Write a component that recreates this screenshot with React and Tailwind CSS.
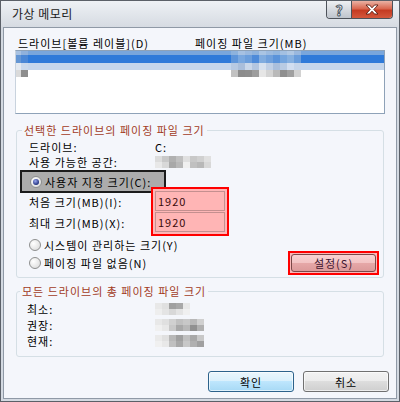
import React from "react";

// blurred list rows: [left blocks], [right blocks], base colour, height
const listRows = [
  {
    h: "h-[4px]",
    base: "bg-[#79a6dc]",
    left: ["bg-[#a8c2e2]", "bg-[#8fb1dc]"],
    right: ["bg-[#8db2dd]", "bg-[#a6c1e2]", "bg-[#9ab9df]", "bg-[#8fb3dd]", "bg-[#a9c4e3]", "bg-[#9cbbe0]", "bg-[#93b6de]", "bg-[#a3c0e2]", "bg-[#b0c8e4]", "bg-[#9ab8de]"],
  },
  {
    h: "h-[8px]",
    base: "bg-[#2f7ad9]",
    left: ["bg-[#6496d4]", "bg-[#4a87d6]"],
    right: ["bg-[#5e95da]", "bg-[#7aa8df]", "bg-[#6b9edc]", "bg-[#4e8bd9]", "bg-[#80acdf]", "bg-[#6fa0dc]", "bg-[#5a93da]", "bg-[#74a5de]", "bg-[#86b0e0]", "bg-[#6a9ddb]"],
  },
  {
    h: "h-[7px]",
    base: "bg-[#c5d6ec]",
    left: ["bg-[#e3e9f1]", "bg-[#cad9ec]"],
    right: ["bg-[#b7c9e2]", "bg-[#a9bedb]", "bg-[#c9d7ea]", "bg-[#b3c6e0]", "bg-[#d6e1ef]", "bg-[#c0d0e6]", "bg-[#aabfdc]", "bg-[#b9cbe3]", "bg-[#d2def0]", "bg-[#c6d5ea]"],
  },
  {
    h: "h-[7px]",
    base: "bg-white",
    left: ["bg-[#dadada]", "bg-[#8e8e8e]"],
    right: ["bg-[#c2c2c2]", "bg-[#8c8c8c]", "bg-[#8e8e8e]", "bg-[#9d9d9d]", "bg-[#e6e6e6]", "bg-[#d4d4d4]", "bg-[#bababa]", "bg-[#8f8f8f]", "bg-[#a0a0a0]", "bg-[#d2d2d2]"],
  },
];

const freeSpace = [
  ["bg-[#dcdcdc]", "bg-[#c8c8c8]", "bg-[#b0b0b0]", "bg-[#c0c0c0]", "bg-[#e0e0e0]", "bg-[#c8c8c8]", "bg-[#d0d0d0]", "bg-[#e0e0e0]"],
  ["bg-[#e8e8e8]", "bg-[#d8d8d8]", "bg-[#a8a8a8]", "bg-[#b8b8b8]", "bg-[#f0f0f0]", "bg-[#c0c0c0]", "bg-[#b8b8b8]", "bg-[#d8d8d8]"],
];

const totals = [
  {
    label: "최소:",
    pix: [
      ["bg-[#e8e8e8]", "bg-[#e0e0e0]", "bg-[#a0a0a0]", "bg-[#a8a8a8]", "bg-[#e8e8e8]"],
      ["bg-[#eeeeee]", "bg-[#e4e4e4]", "bg-[#d8d8d8]", "bg-[#e4e4e4]", "bg-[#f0f0f0]"],
    ],
  },
  {
    label: "권장:",
    pix: [
      ["bg-[#e8e8e8]", "bg-[#e0e0e0]", "bg-[#d0d0d0]", "bg-[#c0c0c0]", "bg-[#c8c8c8]", "bg-[#b8b8b8]", "bg-[#d0d0d0]"],
      ["bg-[#f0f0f0]", "bg-[#e8e8e8]", "bg-[#c8c8c8]", "bg-[#a8a8a8]", "bg-[#b8b8b8]", "bg-[#909090]", "bg-[#b0b0b0]"],
    ],
  },
  {
    label: "현재:",
    pix: [
      ["bg-[#eaeaea]", "bg-[#e0e0e0]", "bg-[#b8b8b8]", "bg-[#a0a0a0]", "bg-[#c0c0c0]", "bg-[#a8a8a8]", "bg-[#c8c8c8]"],
      ["bg-[#f0f0f0]", "bg-[#e8e8e8]", "bg-[#c0c0c0]", "bg-[#a8a8a8]", "bg-[#c8c8c8]", "bg-[#b0b0b0]", "bg-[#a0a0a0]"],
    ],
  },
];

function Pix({ rows }) {
  return (
    <div className="flex flex-col">
      {rows.map((row, i) => (
        <div key={i} className="flex">
          {row.map((c, j) => (
            <div key={j} className={`w-[7px] h-[6px] ${c}`} />
          ))}
        </div>
      ))}
    </div>
  );
}

function Radio({ checked }) {
  return (
    <span className="w-[12px] h-[12px] rounded-full border border-[#8e8f8f] bg-[radial-gradient(circle_at_35%_35%,#ffffff,#d6d6d6)] flex items-center justify-center shrink-0">
      {checked && (
        <span className="w-[6px] h-[6px] rounded-full bg-[radial-gradient(circle_at_40%_35%,#9aa8f0,#1b2a78_75%)]" />
      )}
    </span>
  );
}

export default function App() {
  return (
    <div className="w-[400px] h-[402px] flex flex-col bg-[#d3d9e1] border border-[#5b6068] text-[11px] leading-[14px] tracking-[1px] text-black font-['Noto_Sans_CJK_KR','Noto_Sans',sans-serif]">
      {/* Title bar */}
      <div className="h-[26px] flex justify-between bg-gradient-to-b from-[#eef1f5] to-[#d6dbe2]">
        <span className="ml-[11px] mt-[6px] text-[12px] tracking-[0.5px] text-[#1a1a1a]">가상 메모리</span>
        <div className="flex mr-[6px] h-[18px] border border-t-0 border-[#4d525a] rounded-b-[4px] overflow-hidden">
          <div className="w-[25px] flex items-center justify-center bg-gradient-to-b from-[#eef0f3] to-[#bfc5cd] border-r border-[#4d525a] text-[14px] font-bold tracking-normal text-white [-webkit-text-stroke:1px_#4f5a66]">
            ?
          </div>
          <div className="w-[40px] flex items-center justify-center bg-[linear-gradient(to_bottom,#eab2a4_0%,#d9674f_45%,#c53b22_55%,#d4573c_100%)]">
            <svg width="14" height="11" viewBox="0 0 14 11">
              <path
                d="M1 1h3.5L7 3.8 9.5 1H13L8.8 5.5 13 10H9.5L7 7.2 4.5 10H1l4.2-4.5z"
                fill="#ffffff"
                stroke="#5a1d12"
                strokeWidth="0.9"
              />
            </svg>
          </div>
        </div>
      </div>

      {/* Client area */}
      <div className="flex-1 mx-[2px] mb-[2px] bg-[#f4f6fb] border border-[#8f99a6] flex flex-col">
        <div className="flex mt-[8px] pl-[14px]">
          <span className="w-[177px]">드라이브[볼륨 레이블](D)</span>
          <span>페이징 파일 크기(MB)</span>
        </div>

        {/* Drive list */}
        <div className="mx-[11px] h-[64px] bg-white border border-[#8ea2b8] border-l-[#c9d3de] flex flex-col">
          {listRows.map((r, i) => (
            <div key={i} className={`flex ${r.h} ${r.base}`}>
              <div className={`w-[5px] ${r.left[0]}`} />
              <div className={`w-[7px] ${r.left[1]}`} />
              <div className="w-[203px]" />
              {r.right.map((c, j) => (
                <div key={j} className={`w-[7px] ${c}`} />
              ))}
            </div>
          ))}
        </div>

        {/* Selected drive */}
        <fieldset className="mx-[12px] mt-[9px] border border-[#d5dfe5] rounded-[3px] pb-[2px]">
          <legend className="ml-[5px] px-[2px] text-[#a23b1e]">선택한 드라이브의 페이징 파일 크기</legend>
          <div className="pl-[12px] pr-[4px]">
            <div className="flex mt-[3px]">
              <span className="w-[126px]">드라이브:</span>
              <span>C:</span>
            </div>
            <div className="flex mt-[1px] h-[14px] items-center">
              <span className="w-[126px]">사용 가능한 공간:</span>
              <Pix rows={freeSpace} />
            </div>
            <div className="-ml-[9px] mt-[1px] w-[146px] h-[23px] border-2 border-[#1c1c1c] bg-[#acacac] flex items-center gap-[3px] pl-[8px]">
              <Radio checked />
              <span>사용자 지정 크기(C):</span>
            </div>
            <div className="flex -mt-[6px]">
              <div className="w-[122px] pt-[4px] flex flex-col">
                <span className="h-[21px] flex items-center">처음 크기(MB)(I):</span>
                <span className="h-[20px] mt-[1px] flex items-center">최대 크기(MB)(X):</span>
              </div>
              <div className="relative w-[78px] h-[49px] border-2 border-[#ff0000] bg-[#fdb6b6] p-[2px] flex flex-col gap-[1px]">
                <div className="h-[21px] border border-[#c58f8f] bg-[#ffb5b5] pl-[2px] flex items-center text-[#3a0a0a]">1920</div>
                <div className="h-[20px] border border-[#c58f8f] bg-[#ffb5b5] pl-[2px] flex items-center text-[#3a0a0a]">1920</div>
              </div>
            </div>
            <div className="flex justify-between">
              <div className="flex flex-col">
                <div className="h-[18px] flex items-center gap-[3px]">
                  <Radio />
                  <span>시스템이 관리하는 크기(Y)</span>
                </div>
                <div className="h-[18px] flex items-center gap-[3px]">
                  <Radio />
                  <span>페이징 파일 없음(N)</span>
                </div>
              </div>
              <div className="mt-[15px] w-[91px] h-[24px] border-2 border-[#ff0000] bg-[#f9b8b8] p-[1px]">
                <div className="h-full rounded-[3px] border border-[#7a4848] bg-[linear-gradient(to_bottom,#f8d2d2_0%,#f2c3c3_50%,#e6a8a8_50%,#dc9a9a_100%)] flex items-center justify-center text-[#3d1530]">
                  설정(S)
                </div>
              </div>
            </div>
          </div>
        </fieldset>

        {/* Totals */}
        <fieldset className="mx-[12px] mt-[6px] border border-[#d5dfe5] rounded-[3px] pb-[7px]">
          <legend className="ml-[3px] px-[2px] text-[#a23b1e]">모든 드라이브의 총 페이징 파일 크기</legend>
          <div className="pl-[10px] mt-[3px]">
            {totals.map((t) => (
              <div key={t.label} className="flex h-[16px] items-center">
                <span className="w-[128px]">{t.label}</span>
                <Pix rows={t.pix} />
              </div>
            ))}
          </div>
        </fieldset>

        <div className="flex justify-end gap-[9px] mt-[14px] mr-[7px]">
          <button className="w-[86px] h-[21px] rounded-[3px] border border-[#2c628b] bg-[linear-gradient(to_bottom,#eaf6fd_0%,#d9f0fc_50%,#bee6fd_50%,#a7d9f5_100%)] shadow-[inset_0_0_0_1px_#ffffffa0] flex items-center justify-center">
            확인
          </button>
          <button className="w-[86px] h-[21px] rounded-[3px] border border-[#707070] bg-[linear-gradient(to_bottom,#f2f2f2_0%,#ebebeb_50%,#dddddd_50%,#cfcfcf_100%)] shadow-[inset_0_0_0_1px_#ffffffa0] flex items-center justify-center">
            취소
          </button>
        </div>
      </div>
    </div>
  );
}
